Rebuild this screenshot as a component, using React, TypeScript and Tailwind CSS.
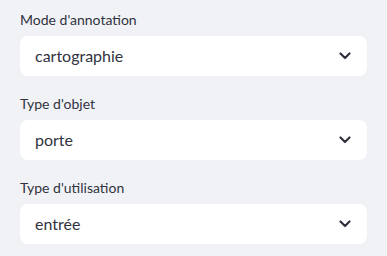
const fields = [
  { label: "Mode d'annotation", value: 'cartographie' },
  { label: "Type d'objet", value: 'porte' },
  { label: "Type d'utilisation", value: 'entrée' },
]

function Chevron() {
  return (
    <svg width="12" height="8" viewBox="0 0 12 8" fill="none" className="shrink-0">
      <path d="M1.5 1.5L6 6L10.5 1.5" stroke="#31333F" strokeWidth="2.2" strokeLinecap="round" strokeLinejoin="round" />
    </svg>
  )
}

export default function App() {
  return (
    <div
      className="w-[387px] h-[256px] bg-[#f0f2f6] px-5 pt-[10px] flex flex-col gap-[18px] text-[#31333F]"
      style={{ fontFamily: 'Lato, "Noto Sans", sans-serif' }}
    >
      {fields.map((f) => (
        <div key={f.label} className="flex flex-col gap-[6px]">
          <label className="text-[14px] leading-5 h-5">{f.label}</label>
          <div className="h-10 bg-white rounded-lg flex items-center justify-between pl-[15px] pr-[16px]">
            <span className="text-[16px]">{f.value}</span>
            <Chevron />
          </div>
        </div>
      ))}
    </div>
  )
}
